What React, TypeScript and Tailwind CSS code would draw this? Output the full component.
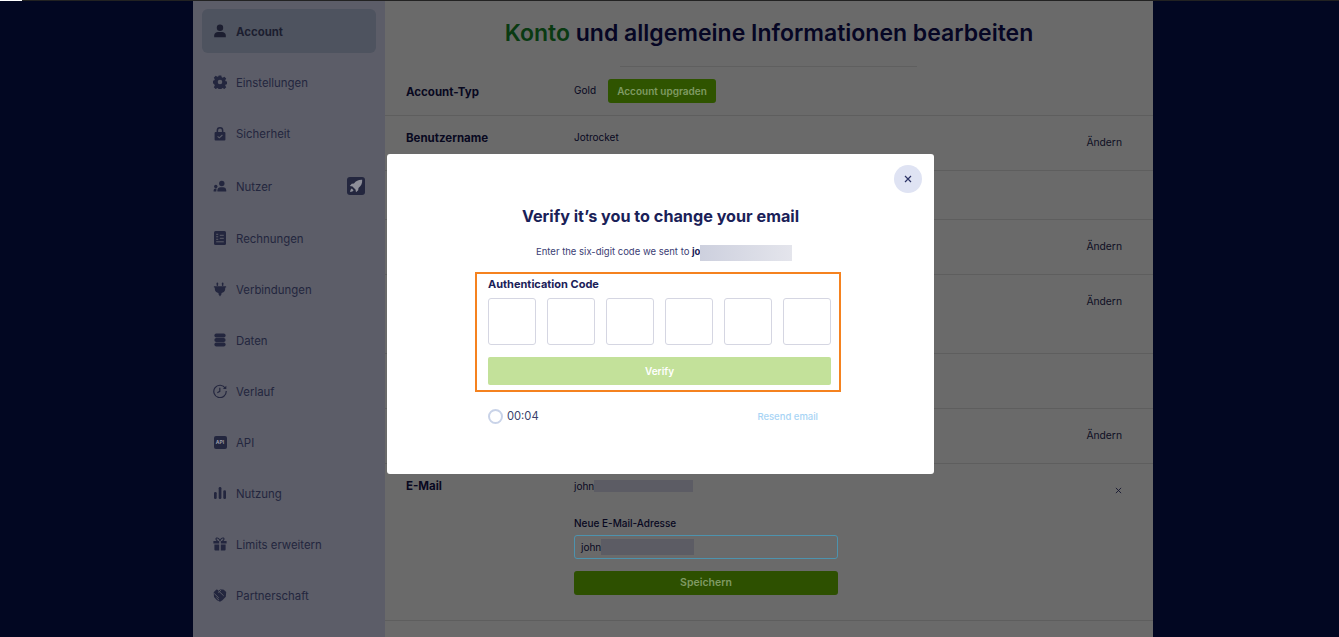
import type { ReactNode } from "react";

const font = "font-['Inter','Liberation_Sans',sans-serif]";
const side = "#5c5d68";

function Svg({ children, w = 14, h = 14 }: { children: ReactNode; w?: number; h?: number }) {
  return (
    <svg viewBox="0 0 14 14" width={w} height={h} fill="currentColor">
      {children}
    </svg>
  );
}

const UserIcon = (
  <Svg>
    <circle cx="7" cy="3.8" r="3.2" />
    <path d="M1.2 13.2v-1.6C1.2 9.3 3 8 5 8h4c2 0 3.8 1.3 3.8 3.6v1.6z" />
  </Svg>
);

const CogIcon = (
  <Svg>
    <path
      fillRule="evenodd"
      d="M5.7.4h2.6l.4 1.9 1 .4 1.6-1 1.9 1.9-1 1.6.4 1 1.9.4v2.6l-1.9.4-.4 1 1 1.6-1.9 1.9-1.6-1-1 .4-.4 1.9H5.7l-.4-1.9-1-.4-1.6 1-1.9-1.9 1-1.6-.4-1L0 8.3V5.7l1.4-.4.4-1-1-1.6 1.9-1.9 1.6 1 1-.4zM7 4.7a2.3 2.3 0 1 0 0 4.6 2.3 2.3 0 0 0 0-4.6z"
    />
  </Svg>
);

const LockIcon = (
  <Svg h={15}>
    <path d="M3.6 5.6V4a3.4 3.4 0 0 1 6.8 0v1.6h1a1 1 0 0 1 1 1v6.4a1 1 0 0 1-1 1H2.6a1 1 0 0 1-1-1V6.6a1 1 0 0 1 1-1zm1.5 0h3.8V4a1.9 1.9 0 0 0-3.8 0z" />
    <path d="M4.6 9.8l1.7 1.5 3.1-2.800" fill="none" stroke={side} strokeWidth="1.1" />
  </Svg>
);

const UsersIcon = (
  <Svg>
    <circle cx="8.8" cy="4.5" r="2.7" />
    <path d="M4.4 12.4v-1.2c0-1.900 1.400-3 3-3h2.800c1.600 0 3 1.100 3 3v1.200z" />
    <circle cx="2.8" cy="7.5" r="1.7" />
    <path d="M.6 12.400v-.8c0-1.200.8-2 1.900-2h1l-.2 2.800z" />
  </Svg>
);

const InvoiceIcon = (
  <Svg>
    <rect x="1" y="0" width="12" height="14" rx="1.5" />
    <path d="M3.2 3.3h2M3.2 5.8h2M3.2 8.3h2M3.2 10.8h7.6M6.8 4.3h4M6.8 7.3h4" stroke={side} strokeWidth="1" />
  </Svg>
);

const PlugIcon = (
  <Svg w={14} h={15}>
    <rect x="3.6" y="0" width="1.5" height="3.4" rx=".7" />
    <rect x="8.9" y="0" width="1.5" height="3.4" rx=".7" />
    <path d="M.9 3.8h12.2v1.100h-.9v1.700c0 2.100-1.700 3.700-3.700 3.900v1.200L7 14l-1.500-2.300v-1.200c-2-.2-3.700-1.800-3.700-3.900V4.900H.9z" />
  </Svg>
);

const DbIcon = (
  <Svg>
    <rect x="1.4" y="0.6" width="11.2" height="3.8" rx="1.9" />
    <rect x="1.4" y="5.1" width="11.2" height="3.8" rx="1.9" />
    <rect x="1.4" y="9.6" width="11.2" height="3.8" rx="1.9" />
  </Svg>
);

const ClockIcon = (
  <Svg>
    <path d="M12.3 4.2A6.2 6.2 0 1 0 13.2 7" fill="none" stroke="currentColor" strokeWidth="1.2" />
    <path d="M13.3 1.7v3.400H9.900z" />
    <path d="M6.8 3.7v3.700l-2.500 1.300" fill="none" stroke="currentColor" strokeWidth="1.2" />
  </Svg>
);

const ApiIcon = (
  <div className="w-[13px] h-[13px] rounded-[2px] bg-[#23263e] text-[5px] font-bold leading-[13px] text-center text-[#9a9ba6]">
    API
  </div>
);

const ChartIcon = (
  <Svg>
    <rect x="1" y="6" width="2.7" height="7" rx="1.3" />
    <rect x="5.7" y="1" width="2.7" height="12" rx="1.3" />
    <rect x="10.3" y="4.2" width="2.7" height="8.8" rx="1.3" />
  </Svg>
);

const GiftIcon = (
  <Svg>
    <path d="M.4 4h5.800v2.600H.4zM7.800 4h5.800v2.600H7.800zM1.400 7.400h4.800V13.500H2.400a1 1 0 0 1-1-1zM7.800 7.400h4.800v5.100a1 1 0 0 1-1 1H7.800z" />
    <path d="M7 3.800C6 1.300 4.700.6 3.600 1.100 2.500 1.700 3 3.400 4.600 3.800M7 3.800c1-2.500 2.300-3.200 3.400-2.700 1.100.6.600 2.300-1 2.700" fill="none" stroke="currentColor" strokeWidth="1.1" />
  </Svg>
);

const PartnerIcon = (
  <Svg>
    <path d="M3.400 1.400L6 2.200l1.800-1 3 .5 2.400 2.200-.4 4.800-3.400 3.600-2.400 1.400-3-1.400L1 9.100.7 4.200z" />
    <path d="M1.200 5.500l4.600 4.400M5 2.400l5.700 5.400M8.200 1.800L5.400 4.800M3.400 9.600l2.600 2.600" fill="none" stroke={side} strokeWidth=".9" />
  </Svg>
);

const RocketIcon = (
  <svg viewBox="0 0 14 14" width={14} height={14} fill="currentColor">
    <path d="M13.200.8c-3.600-.2-6.200 1-8.200 3.700L2.700 4.800.8 7l2.700.5 3 3 .5 2.700 2.200-1.900.3-2.300c2.700-2 3.900-4.600 3.700-8.200z" />
    <path d="M2.800 9.500c-1 .5-1.500 1.700-1.700 3.400 1.700-.2 2.900-.7 3.400-1.700z" />
  </svg>
);

const items: { label: string; icon: ReactNode }[] = [
  { label: "Account", icon: UserIcon },
  { label: "Einstellungen", icon: CogIcon },
  { label: "Sicherheit", icon: LockIcon },
  { label: "Nutzer", icon: UsersIcon },
  { label: "Rechnungen", icon: InvoiceIcon },
  { label: "Verbindungen", icon: PlugIcon },
  { label: "Daten", icon: DbIcon },
  { label: "Verlauf", icon: ClockIcon },
  { label: "API", icon: ApiIcon },
  { label: "Nutzung", icon: ChartIcon },
  { label: "Limits erweitern", icon: GiftIcon },
  { label: "Partnerschaft", icon: PartnerIcon },
];

function Sidebar() {
  return (
    <aside className="w-[192px] shrink-0 bg-[#5c5d68] pt-[8px] px-[9px] flex flex-col gap-[7px] text-[#23263e]">
      {items.map((item) => {
        const active = item.label === "Account";
        return (
          <div
            key={item.label}
            className={`flex items-center pl-[11px] pr-[11px] rounded-md ${
              item.label === "Nutzer" ? "h-[47px]" : "h-[44px]"
            } ${active ? "bg-[#4e535f] text-[#1c1e30] font-bold" : ""}`}
          >
            <span className="w-[14px] flex justify-center mr-[9px]">{item.icon}</span>
            <span className="text-[11.4px] pt-[2px] leading-[14px]">{item.label}</span>
            {item.label === "Nutzer" && (
              <span className="ml-auto w-[18px] h-[18px] rounded-[3px] bg-[#23263e] text-[#8d8e98] flex items-center justify-center">
                {RocketIcon}
              </span>
            )}
          </div>
        );
      })}
    </aside>
  );
}

function Row({
  label,
  height,
  value,
  change,
}: {
  label?: string;
  height: string;
  value?: ReactNode;
  change?: boolean;
}) {
  return (
    <div className={`${height} border-b border-[#5e5e5e] flex pl-[21px] pr-[31px]`}>
      <div className="w-[168px] pt-[14px] text-[11.5px] font-bold text-[#08081f]">{label}</div>
      <div className="flex-1 pt-[14px] text-[10px] text-[#08081f]">{value}</div>
      {change && <div className="pt-[19px] text-[10.3px] text-[#0e0f24]">Ändern</div>}
    </div>
  );
}

function Content() {
  return (
    <main className="w-[768px] shrink-0 bg-[#6a6a6a]">
      <h1 className="h-[65px] pt-[16px] text-center text-[23px] leading-[32px] font-semibold text-[#060624]">
        <span className="text-[#0a3a12]">Konto</span> und allgemeine Informationen bearbeiten
      </h1>
      <div className="w-[297px] h-px bg-[#5f5f5f] ml-[235px]" />
      <div className="h-[49px] border-b border-[#5e5e5e] flex items-center pl-[21px]">
        <div className="w-[168px] pt-[3px] text-[11.5px] font-bold text-[#08081f]">Account-Typ</div>
        <span className="text-[10px] text-[#08081f] -mt-[2px]">Gold</span>
        <button className="ml-[12px] w-[108px] h-[24px] rounded-[3px] bg-[#2f5400] text-[10px] font-semibold text-[#7f9a63]">
          Account upgraden
        </button>
      </div>
      <Row label="Benutzername" height="h-[55px]" value="Jotrocket" change />
      <Row height="h-[49px]" />
      <Row height="h-[55px]" change />
      <Row height="h-[79px]" change />
      <Row height="h-[55px]" />
      <Row height="h-[55px]" change />
      <div className="h-[157px] border-b border-[#5e5e5e] flex pl-[21px] pr-[31px]">
        <div className="w-[168px] pt-[14px] text-[11.5px] font-bold text-[#08081f]">E-Mail</div>
        <div className="w-[264px] pt-[15px] text-[10px] text-[#08081f]">
          <div className="flex items-center h-[14px]">
            john
            <span className="w-[99px] h-[12px] bg-[#5c5c64]" />
          </div>
          <div className="mt-[23px] font-medium">Neue E-Mail-Adresse</div>
          <div className="mt-[4px] h-[24px] rounded-[3px] border border-[#4d93ae] flex items-center pl-[6px]">
            john
            <span className="w-[93px] h-[16px] bg-[#5c5c64]" />
          </div>
          <button className="mt-[12px] w-full h-[24px] rounded-[3px] bg-[#2d5000] text-[10.5px] font-semibold text-[#7f9a63]">
            Speichern
          </button>
        </div>
        <div className="ml-auto pt-[23px] text-[#14152f]">
          <svg viewBox="0 0 8 8" width={7} height={7} fill="none" stroke="currentColor" strokeWidth="1">
            <path d="M1 1l6 6M7 1L1 7" />
          </svg>
        </div>
      </div>
    </main>
  );
}

function VerifyModal() {
  return (
    <div className="absolute left-[387px] top-[154px] w-[547px] h-[320px] bg-white rounded-[3px] flex flex-col items-center text-[#1a2158]">
      <button className="absolute right-[12px] top-[11px] w-[28px] h-[28px] rounded-full bg-[#dfe3f3] flex items-center justify-center text-[#2c3366]">
        <svg viewBox="0 0 8 8" width={8} height={8} fill="none" stroke="currentColor" strokeWidth="1.2">
          <path d="M1 1l6 6M7 1L1 7" />
        </svg>
      </button>
      <h2 className="mt-[51px] h-[22px] text-[16.2px] leading-[22px] font-bold">Verify it’s you to change your email</h2>
      <div className="mt-[17px] h-[17px] flex items-center text-[9.5px] text-[#3b4074] self-start ml-[149px]">
        Enter the six-digit code we sent to&nbsp;
        <b className="text-[#1a2158]">jo</b>
        <span className="w-[92px] h-[16px] bg-linear-to-r from-[#cdd0de] to-[#e4e5ec]" />
      </div>
      <div className="self-start ml-[88px] mt-[11px] w-[366px] h-[120px] border-2 border-[#f5821f] pl-[11px] pr-[8px] pt-[2px]">
        <div className="h-[16px] text-[11px] leading-[16px] font-bold">Authentication Code</div>
        <div className="mt-[6px] flex justify-between">
          {[0, 1, 2, 3, 4, 5].map((i) => (
            <div key={i} className="w-[48px] h-[47px] rounded-[3px] border border-[#d5d6e2] bg-white" />
          ))}
        </div>
        <button className="mt-[12px] w-full h-[28px] rounded-[2px] bg-[#c3e19a] text-[10px] font-semibold text-white">
          Verify
        </button>
      </div>
      <div className="self-start ml-[101px] mt-[16px] w-[330px] flex items-center">
        <span className="w-[15px] h-[15px] rounded-full border-2 border-[#c9d3e8]" />
        <span className="ml-[4px] text-[11.2px] text-[#3a3f6b]">00:04</span>
        <span className="ml-auto pt-[1px] text-[9.5px] font-medium text-[#a8d4f5]">Resend email</span>
      </div>
    </div>
  );
}

export default function App() {
  return (
    <div className={`relative h-[637px] w-[1339px] overflow-hidden bg-[#020722] ${font}`}>
      <div className="h-px bg-[#222] flex">
        <div className="w-[22px] bg-white" />
      </div>
      <div className="flex ml-[193px] h-[636px]">
        <Sidebar />
        <Content />
      </div>
      <VerifyModal />
    </div>
  );
}
